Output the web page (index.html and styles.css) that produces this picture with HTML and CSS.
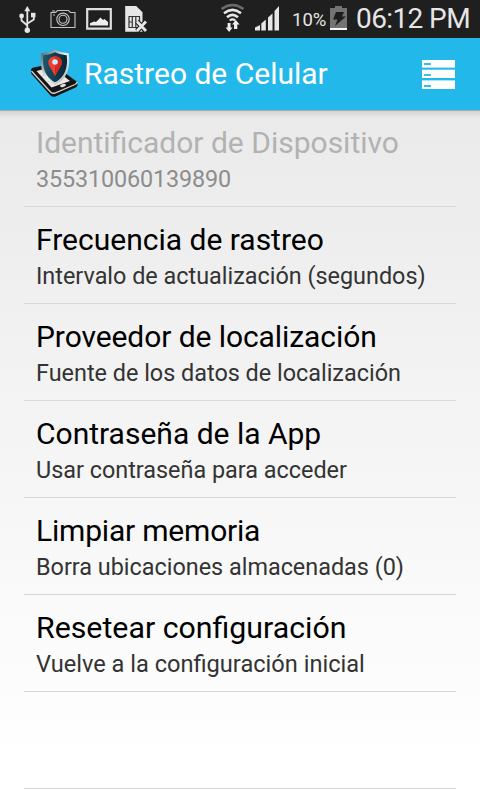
FILE: index.html
```html
<!DOCTYPE html>
<html lang="es">
<head>
    <meta charset="UTF-8">
    <title>Rastreo de Celular</title>
    <link rel="stylesheet" href="styles.css">
</head>
<body>
    <div class="statusBar">
        <svg class="notifications" width="160" height="38" viewBox="0 0 160 38">
            <!-- usb -->
            <g fill="none" stroke="#e6e6e6" stroke-width="1.8">
                <path d="M27.3 10v20M21.500 17v3.5l5.800 5M33.8 16v3.5l-6.3 4"/>
            </g>
            <g fill="#e6e6e6">
                <path d="M27.3 6l3 5.3h-6z"/>
                <circle cx="21.6" cy="16" r="2.4"/>
                <path d="M31 12.800h4.500v4.500H31z"/>
                <circle cx="27.3" cy="30.3" r="2.7"/>
            </g>
            <!-- camera -->
            <g fill="none" stroke="#c4c4c4" stroke-width="1.1">
                <path d="M51 12.5h4.5l2-2h11l2 2H75v15H51z"/>
                <circle cx="63" cy="19.3" r="6.2"/>
                <circle cx="63" cy="19.3" r="4"/>
                <path d="M52 11h3M53 15h2"/>
            </g>
            <!-- picture -->
            <path d="M87.2 9.2h23.6v19.4H87.2z" fill="none" stroke="#dedede" stroke-width="2.2"/>
            <path d="M90 25.5v-2.2l4-1.8 2 .5 4.500-4.500 2.500 2.500 1.500-1 3.500 3v3.5z" fill="#eee"/>
            <!-- sim card -->
            <path d="M125.2 6h11l6.3 6.3v19.5h-17.3z" fill="#e6e6e6"/>
            <path d="M129 16.5h10.5v11H129zM132.3 16.5v11M135.8 16.5v11M129 22h3.300M135.800 22h3.500" fill="none" stroke="#333" stroke-width="1.2"/>
            <path d="M137 21.500l9 9.500M146 21.500l-9 9.500" stroke="#1f1f1f" stroke-width="5"/>
            <path d="M137 21.500l9 9.500M146 21.500l-9 9.500" stroke="#e6e6e6" stroke-width="2.8"/>
        </svg>
        <svg class="signals" width="70" height="38" viewBox="0 0 70 38">
            <!-- wifi -->
            <g fill="none" stroke-width="2.5">
                <path d="M1.5 9Q12.500 1 23.500 9" stroke="#6b6b6b"/>
                <path d="M4 13.200Q12.500 6.500 21 13.200M7 17.300Q12.500 12.500 18 17.300" stroke="#e8e8e8"/>
                <path d="M9.700 20.500Q12.500 18.200 15.300 20.500" stroke="#e8e8e8" stroke-width="2"/>
            </g>
            <path d="M7.600 23h3v4.500h2L9.100 32l-3.500-4.500h2zM14 29v-4.500h-2l3.800-4.500 3.800 4.500h-2.300V29z" fill="#eee"/>
            <!-- mobile signal -->
            <path d="M35 30.500v-3l5-2.500v5.500zM41.300 30.500v-7l4.500-4v11zM48 30.500V17.500l4.500-4v17zM54.500 30.500V11l4.500-5v24.500z" fill="#e6e6e6"/>
        </svg>
        <span class="percent">10%</span>
        <svg class="battery" width="18" height="38" viewBox="0 0 18 38">
            <path d="M0 8h5V6h7v2h5v22H0z" fill="#737373"/>
            <path d="M0 28h17v2H0z" fill="#f5f5f5"/>
            <path d="M6 12h8l-2 4.500h4L5 26l2.500-6.500H3z" fill="#1d1d1d"/>
        </svg>
        <span class="clock">06:12 PM</span>
    </div>

    <div class="actionBar">
        <svg class="logo" width="48" height="50" viewBox="0 0 48 50">
            <defs>
                <linearGradient id="shield" x1="0" x2="1">
                    <stop offset="0" stop-color="#1c5c70"/>
                    <stop offset="1" stop-color="#08202e"/>
                </linearGradient>
                <linearGradient id="rim" x1="0" y1="0" x2="1" y2="1">
                    <stop offset="0" stop-color="#53656d"/>
                    <stop offset=".5" stop-color="#eef2f3"/>
                    <stop offset="1" stop-color="#a2aeb2"/>
                </linearGradient>
            </defs>
            <!-- phone -->
            <path d="M1 21q0-2 3-2.500l18-4L46 32q2 2 1.500 4.500-.5 1.500-3 2.500l-19 8.500q-3 1-5-1L1.500 25q-1-2-.5-4z" fill="#151515"/>
            <path d="M1.500 22l19 21q2 2 5 .8L45 35.500q2-1 2-2.500" fill="none" stroke="#d0d3d4" stroke-width="1.300"/>
            <path d="M6.500 22L22 18l18 14-18.500 6.500z" fill="#ebe5e3"/>
            <path d="M12 27l18-5M17 33l18-6M13 21l15 15" stroke="#cfc5c1" stroke-width=".7"/>
            <ellipse cx="33" cy="36.500" rx="3" ry="1.500" fill="#dcdcdc" transform="rotate(-15 33 36.500)"/>
            <!-- shield with pin -->
            <path d="M12.300 5.300Q19.500 5 25 2q5.500 3 12.700 3.300Q40.500 27 25 34.500 9.500 27 12.300 5.300z" fill="url(#shield)" stroke="url(#rim)" stroke-width="2.200"/>
            <path d="M25 27l-6.500-11.500Q17 8 25 7.300q8 .7 6.500 8.200z" fill="#ef4034"/>
            <path d="M25 27V7.300q8 .7 6.500 8.200z" fill="#d42a23"/>
            <circle cx="25" cy="13" r="2.800" fill="#c9effa"/>
        </svg>
        <span class="appName">Rastreo de Celular</span>
        <svg class="menuIcon" width="33" height="30" viewBox="0 0 33 30">
            <path d="M0 1h33v7H0zM0 11h33v8H0zM0 22h33v8H0z" fill="#fff"/>
            <path d="M0 8h33v1H0zM0 10.500h33v.5H0zM0 21h33v1H0z" fill="#a8e3f7"/>
            <path d="M2 4h7v2H2zM2 15h7v2H2zM2 26h7v2H2z" fill="#35c0ea"/>
        </svg>
    </div>

    <div class="settings">
        <div class="item disabled">
            <div class="title">Identificador de Dispositivo</div>
            <div class="summary">355310060139890</div>
        </div>
        <div class="item">
            <div class="title">Frecuencia de rastreo</div>
            <div class="summary">Intervalo de actualización (segundos)</div>
        </div>
        <div class="item">
            <div class="title tight">Proveedor de localización</div>
            <div class="summary">Fuente de los datos de localización</div>
        </div>
        <div class="item">
            <div class="title">Contraseña de la App</div>
            <div class="summary">Usar contraseña para acceder</div>
        </div>
        <div class="item">
            <div class="title tighter">Limpiar memoria</div>
            <div class="summary">Borra ubicaciones almacenadas (0)</div>
        </div>
        <div class="item">
            <div class="title wide">Resetear configuración</div>
            <div class="summary wide">Vuelve a la configuración inicial</div>
        </div>
        <div class="item"></div>
    </div>
</body>
</html>
```
FILE: styles.css
```css
* {
    box-sizing: border-box;
}
body {
    margin: 0;
    width: 480px;
    height: 800px;
    overflow: hidden;
    font-family: Roboto, sans-serif;
    background-color: #fff;
}
.statusBar {
    display: flex;
    height: 38px;
    background-color: #1f1f1f;
    color: #e6e6e6;
    white-space: nowrap;
}
.statusBar svg {
    flex: none;
}
.signals {
    margin-left: 60px;
}
.percent {
    width: 38px;
    padding-left: 2px;
    font-size: 18.5px;
    line-height: 40px;
}
.battery {
    margin-left: 2px;
}
.clock {
    margin-left: 8px;
    font-size: 28px;
    line-height: 37px;
    letter-spacing: -0.6px;
}
.actionBar {
    display: flex;
    align-items: center;
    height: 72px;
    padding: 0 25px 0 30px;
    background-color: #22b9ea;
    color: #fff;
}
.appName {
    flex: 1;
    margin-left: 6px;
    font-size: 30px;
    line-height: 36px;
    white-space: nowrap;
}
.settings {
    height: 690px;
    padding: 0 24px;
    background: linear-gradient(#aaa 0, #aaa 1px, rgba(0, 0, 0, .1) 1px, rgba(0, 0, 0, 0) 8px), linear-gradient(#eaeaea, #fff 95%);
}
.item {
    height: 97px;
    padding: 15px 12px 0;
    border-bottom: 1px solid #d8d8d8;
    white-space: nowrap;
}
.title {
    font-size: 30px;
    line-height: 36px;
    color: #000;
}
.title.tight {
    letter-spacing: -0.08px;
}
.title.tighter {
    letter-spacing: -0.2px;
}
.title.wide {
    font-size: 30.3px;
}
.summary {
    font-size: 23.4px;
    line-height: 36px;
    color: #333;
}
.summary.wide {
    font-size: 23.6px;
}
.disabled .title {
    color: #b2b2b2;
}
.disabled .summary {
    color: #8c8c8c;
    letter-spacing: -0.15px;
}
```
